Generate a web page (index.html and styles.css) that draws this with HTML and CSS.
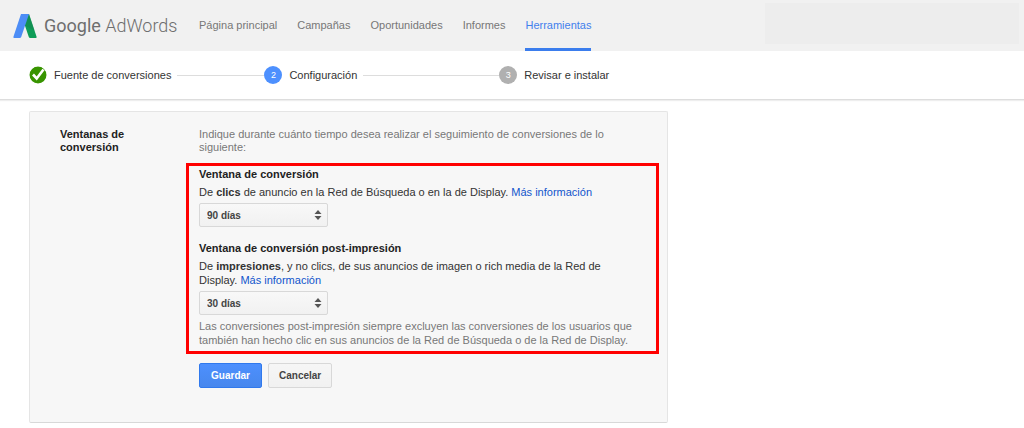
FILE: index.html
```html
<!DOCTYPE html>
<html lang="es">
<head>
<meta charset="utf-8">
<title>Google AdWords</title>
<link rel="stylesheet" href="styles.css">
</head>
<body>
<header class="topbar">
  <a class="brand" href="#">
    <svg class="brand-mark" viewBox="0 0 24 24" aria-hidden="true">
      <path fill="#0f9d58" d="M8 0h8l7.500 22.500c.3 1-.1 1.500-1 1.500h-5.200c-.8 0-1.300-.4-1.500-1.100z"/>
      <path fill="#15804b" d="M16 0l5.500 16.500L12 11.800z" opacity=".45"/>
      <path fill="#4d8df6" d="M8 0h8l-7.800 22.900c-.3.700-.8 1.100-1.500 1.100H1.500c-.9 0-1.300-.5-1-1.500z"/>
    </svg>
    <span class="brand-name"><span class="brand-strong">Google</span> AdWords</span>
  </a>
  <nav class="nav">
    <a class="nav-link" href="#">Página principal</a>
    <a class="nav-link" href="#">Campañas</a>
    <a class="nav-link" href="#">Oportunidades</a>
    <a class="nav-link" href="#">Informes</a>
    <a class="nav-link nav-active" href="#" aria-current="page">Herramientas</a>
  </nav>
  <div class="account"></div>
</header>
<ol class="steps">
  <li class="step">
    <svg class="step-icon" viewBox="0 0 18 18" aria-hidden="true">
      <circle cx="9" cy="9" r="8.500" fill="#389400"/>
      <path d="M4 8.500l3.700 4L14.500 3.500" fill="none" stroke="#fff" stroke-width="2.600"/>
    </svg>
    <span>Fuente de conversiones</span>
  </li>
  <li class="line line-short" aria-hidden="true"></li>
  <li class="step"><span class="step-icon step-current">2</span><span>Configuración</span></li>
  <li class="line line-long" aria-hidden="true"></li>
  <li class="step"><span class="step-icon step-next">3</span><span>Revisar e instalar</span></li>
</ol>
<main class="main">
  <form class="card">
    <h1 class="card-title">Ventanas de conversión</h1>
    <div class="card-body">
      <p class="muted intro">Indique durante cuánto tiempo desea realizar el seguimiento de conversiones de lo siguiente:</p>
      <div class="highlight">
        <section class="field">
          <h2 class="field-title"><label for="clicks">Ventana de conversión</label></h2>
          <p>De <b>clics</b> de anuncio en la Red de Búsqueda o en la de Display. <a class="link" href="#">Más información</a></p>
          <div class="picker">
            <select class="select" id="clicks"><option>90 días</option></select>
            <svg class="arrows" viewBox="0 0 8 10" aria-hidden="true"><path fill="#555" d="M4 0l3.500 4h-7zM.5 6h7L4 10z"/></svg>
          </div>
        </section>
        <section class="field">
          <h2 class="field-title"><label for="views">Ventana de conversión post-impresión</label></h2>
          <p>De <b>impresiones</b>, y no clics, de sus anuncios de imagen o rich media de la Red de Display. <a class="link" href="#">Más información</a></p>
          <div class="picker">
            <select class="select" id="views"><option>30 días</option></select>
            <svg class="arrows" viewBox="0 0 8 10" aria-hidden="true"><path fill="#555" d="M4 0l3.500 4h-7zM.5 6h7L4 10z"/></svg>
          </div>
          <p class="muted">Las conversiones post-impresión siempre excluyen las conversiones de los usuarios que también han hecho clic en sus anuncios de la Red de Búsqueda o de la Red de Display.</p>
        </section>
      </div>
      <div class="actions">
        <button class="button button-primary" type="button">Guardar</button>
        <button class="button" type="button">Cancelar</button>
      </div>
    </div>
  </form>
</main>
</body>
</html>
```
FILE: styles.css
```css
* { box-sizing: border-box; }
body {
  margin: 0;
  background: #fff;
  color: #333;
  font: 11px/13px "Liberation Sans", Arial, sans-serif;
}
h1, h2, p, ol { margin: 0; padding: 0; font-size: inherit; }
a { text-decoration: none; }

.topbar {
  display: flex;
  align-items: stretch;
  height: 51px;
  padding: 0 5px 0 13px;
  background: #f1f1f1;
}
.brand {
  display: flex;
  align-items: center;
  gap: 7px;
  width: 186px;
  color: #6e6e6e;
}
.brand-mark { width: 24px; height: 24px; }
.brand-name { font: 300 18px/24px Roboto, sans-serif; white-space: nowrap; }
.brand-strong { font-weight: 400; }
.nav { display: flex; gap: 20px; }
.nav-link {
  display: flex;
  align-items: center;
  padding-top: 3px;
  border-bottom: 3px solid transparent;
  color: #777;
  white-space: nowrap;
}
.nav-active { border-color: #3b7ded; color: #427fed; }
.account {
  width: 254px;
  margin: 3px 0 7px auto;
  background: #ededed;
}

.steps {
  display: flex;
  align-items: center;
  gap: 6px;
  height: 49px;
  padding: 0 29px;
  border-bottom: 1px solid #ddd;
  box-shadow: 0 1px 1px #eee;
  list-style: none;
}
.step { display: flex; align-items: center; gap: 7px; white-space: nowrap; }
.step-icon {
  width: 18px;
  height: 18px;
  border-radius: 50%;
  color: #fff;
  font-size: 9px;
  line-height: 18px;
  text-align: center;
}
.step-current { background: #4d90fe; }
.step-next { background: #b0b0b0; }
.line { height: 1px; margin-right: -6px; background: #ddd; }
.line-short { width: 87px; }
.line-long { width: 136px; }

.main { padding: 11px 29px 6px; }
.card {
  display: flex;
  max-width: 639px;
  padding: 16px 8px 34px 30px;
  border: 1px solid #e5e5e5;
  border-bottom-color: #d8d8d8;
  border-radius: 2px;
  background: #f7f7f7;
}
.card-title { flex: none; width: 139px; padding-right: 50px; color: #222; }
.card-body { flex: 1; min-width: 0; }
.muted { color: #777; }
.intro { padding-right: 24px; }
.highlight {
  display: grid;
  gap: 14px;
  margin: 9px 0 9px -13px;
  padding: 1px 10px 4px;
  border: 3px solid #f00;
}
.field { display: grid; gap: 4px; line-height: 14px; }
.field-title { color: #222; }
.field p { padding-right: 12px; }
.link { color: #15c; }
.picker { display: grid; width: 129px; }
.select, .arrows { grid-area: 1 / 1; }
.select {
  height: 24px;
  padding: 0 7px;
  border: 1px solid #d8d8d8;
  border-radius: 2px;
  appearance: none;
  background: linear-gradient(#f8f8f8, #f1f1f1);
  color: #444;
  font: bold 10px/13px "Liberation Sans", Arial, sans-serif;
}
.arrows {
  place-self: center end;
  width: 8px;
  height: 10px;
  margin-right: 6px;
  pointer-events: none;
}
.actions { display: flex; gap: 6px; }
.button {
  height: 25px;
  min-width: 63px;
  padding: 0 10px;
  border: 1px solid #d8d8d8;
  border-radius: 2px;
  background: linear-gradient(#f6f6f6, #f1f1f1);
  color: #444;
  font: bold 10px/13px "Liberation Sans", Arial, sans-serif;
}
.button-primary {
  border-color: #3079ed;
  background: linear-gradient(#4d90fe, #4787ed);
  color: #fff;
}
```
